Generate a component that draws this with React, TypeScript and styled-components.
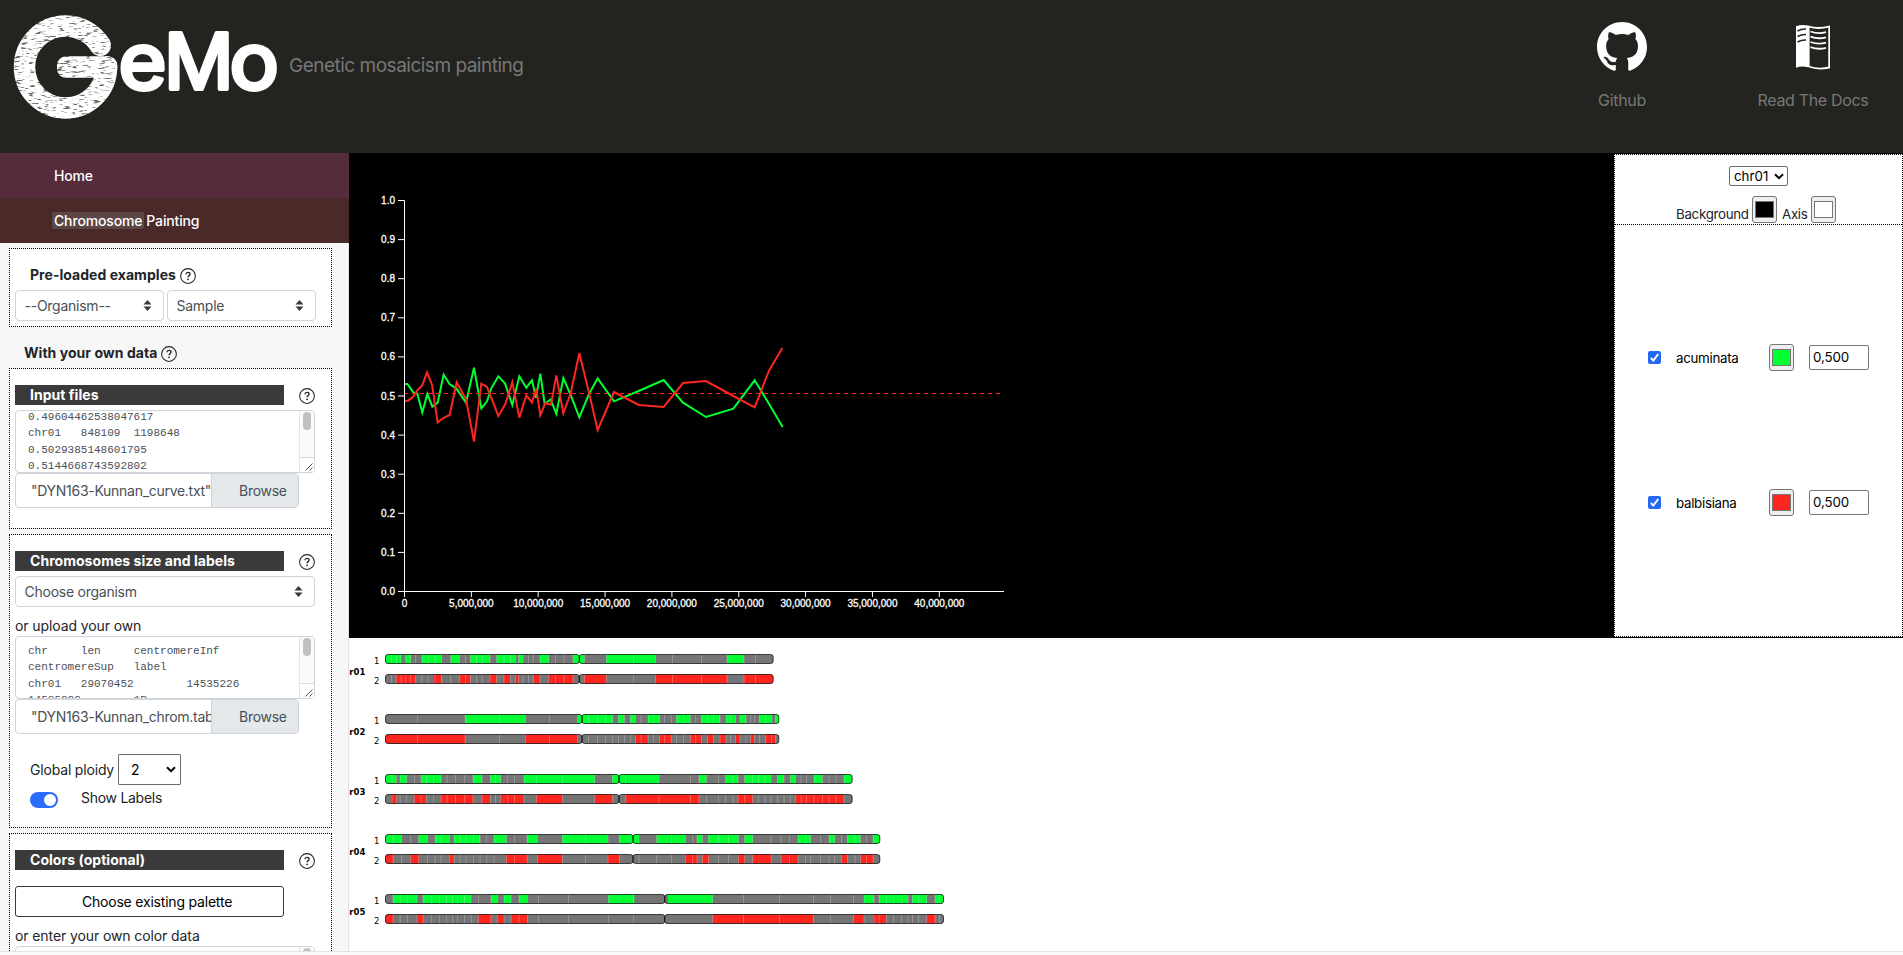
import React from "react";
import styled, { createGlobalStyle } from "styled-components";

const GlobalStyle = createGlobalStyle`
  * { box-sizing: border-box; }
  html, body { margin: 0; padding: 0; background: #fafafa; overflow: hidden; }
  body { font-family: Inter, "Liberation Sans", sans-serif; font-size: 14px; line-height: 20px; letter-spacing: -0.1px; color: #212529; }
  svg { display: block; letter-spacing: 0; }
`;

const Page = styled.div`
  width: 1903px;
  height: 955px;
  display: flex;
  flex-direction: column;
`;

const Header = styled.header`
  height: 153px;
  flex: none;
  background: #23241f;
  display: flex;
  align-items: flex-start;
  color: #777;
`;

const Tagline = styled.div`
  margin: 53px auto 0 0;
  font-size: 19px;
  line-height: 25px;
  letter-spacing: -0.5px;
`;

const HeaderLink = styled.a<{ $width: number; $gap: number }>`
  width: ${(p) => p.$width}px;
  margin-right: ${(p) => p.$gap}px;
  padding-top: 22px;
  display: flex;
  flex-direction: column;
  align-items: center;
  font-size: 16px;
  line-height: 24px;
  letter-spacing: -0.32px;
  white-space: nowrap;
`;

const LinkIcon = styled.span`
  height: 66px;
`;

const Body = styled.div`
  display: flex;
  height: 798px;
  flex: none;
`;

const Footer = styled.footer`
  height: 4px;
  border-top: 1px solid #e3e3e3;
  background: #fafafa;
`;

const Sidebar = styled.aside`
  width: 349px;
  flex: none;
  background: #f7f7f7;
  box-shadow: inset -1px 0 #e3e3e3;
  overflow: hidden;
`;

const NavItem = styled.a<{ $bg: string }>`
  display: flex;
  align-items: center;
  width: 349px;
  height: 45px;
  padding-left: 54px;
  color: #fff;
  font-weight: 500;
  letter-spacing: -0.15px;
  background: ${(p) => p.$bg};
`;

const Marked = styled.span`
  margin: 0 2px 0 -2px;
  padding: 0 2px;
  line-height: 17px;
  border-radius: 2px;
  background: #5d4746;
`;

const Panel = styled.section<{ $height: number; $top: number }>`
  width: 323px;
  height: ${(p) => p.$height}px;
  margin: ${(p) => p.$top}px 0 0 9px;
  padding: 16px 0 0 5px;
  border: 1px dotted #000;
  background: #fff;
`;

const Heading = styled.h2<{ $indent: number; $top?: number }>`
  height: 25px;
  margin: ${(p) => p.$top ?? 0}px 0 0;
  padding-left: ${(p) => p.$indent}px;
  display: flex;
  gap: 4px;
  font-size: 14px;
  line-height: 20px;
  font-weight: 700;
  letter-spacing: 0.04px;
`;

const TitleRow = styled.div`
  height: 25px;
  width: 300px;
  display: flex;
  justify-content: space-between;
`;

const TitleBar = styled.h3`
  width: 269px;
  height: 20px;
  margin: 0;
  padding-left: 15px;
  font-size: 14px;
  line-height: 20px;
  font-weight: 700;
  letter-spacing: 0.04px;
  color: #fff;
  background: #3a3a3a;
`;

const HelpBox = styled.span`
  padding-top: 3px;
`;

const SelectRow = styled.div`
  display: flex;
  gap: 3px;
`;

const SelectBox = styled.div<{ $width: number }>`
  width: ${(p) => p.$width}px;
  height: 31px;
  padding: 0 11px 0 8.5px;
  display: flex;
  align-items: center;
  justify-content: space-between;
  letter-spacing: -0.25px;
  color: #495057;
  border: 1px solid #ced4da;
  border-radius: 4px;
  background: #fff;
`;

const TextArea = styled.div`
  width: 300px;
  height: 63px;
  display: flex;
  border: 1px solid #ced4da;
  border-radius: 4px;
  overflow: hidden;
  background: #fff;
`;

const TextAreaBody = styled.pre<{ $shift: number }>`
  flex: 1;
  height: 61px;
  margin: 0;
  padding-left: 12px;
  overflow: hidden;
  font: 11px/16.4px "Liberation Mono", monospace;
  letter-spacing: 0;
  tab-size: 8;
  color: #495057;

  &::before {
    content: "";
    display: block;
    margin-top: ${(p) => p.$shift}px;
  }
`;

const ScrollTrack = styled.div`
  width: 15px;
  display: flex;
  flex-direction: column;
  justify-content: space-between;
  align-items: center;
  padding-top: 1px;
  background: #fafafa;
  border-left: 1px solid #e4e4e4;
`;

const Thumb = styled.div`
  width: 8px;
  height: 18px;
  border-radius: 4px;
  background: #c1c1c1;
`;

const Resizer = styled.div`
  width: 14px;
  height: 15px;
  border-top: 1px solid #dcdcdc;
  background: #fff;
`;

const FileInput = styled.div`
  width: 284px;
  height: 35px;
  display: flex;
  line-height: 34px;
  letter-spacing: -0.28px;
  color: #495057;
  border: 1px solid #ced4da;
  border-radius: 4px;
  overflow: hidden;
`;

const FileName = styled.span`
  width: 195px;
  flex: none;
  padding-left: 15px;
  overflow: hidden;
  white-space: nowrap;
`;

const Browse = styled.span`
  flex: 1;
  padding-left: 27px;
  background: #e4e8eb;
  border-left: 1px solid #ced4da;
`;

const Hint = styled.p<{ $top: number }>`
  margin: ${(p) => p.$top}px 0 0;
  height: 20px;
`;

const PloidyRow = styled.div`
  display: flex;
  align-items: center;
  justify-content: space-between;
  width: 166px;
  height: 31px;
  margin-top: 20px;
  padding-left: 15px;
  letter-spacing: -0.18px;
`;

const PloidySelect = styled.div`
  width: 63px;
  height: 31px;
  padding: 0 4px 0 12px;
  display: flex;
  align-items: center;
  justify-content: space-between;
  border: 1px solid #6b6b6b;
  border-radius: 1px;
  color: #000;
`;

const SwitchRow = styled.div`
  display: flex;
  gap: 23px;
  margin-top: 3px;
  padding-left: 15px;
  letter-spacing: -0.28px;
`;

const Switch = styled.span`
  width: 28px;
  height: 16px;
  margin-top: 4px;
  padding: 2px;
  display: flex;
  justify-content: flex-end;
  border-radius: 8px;
  background: #2a6cfb;
`;

const Knob = styled.span`
  width: 12px;
  height: 12px;
  border-radius: 50%;
  background: #fff;
`;

const PaletteButton = styled.button`
  display: block;
  width: 269px;
  height: 31px;
  margin-top: 11px;
  padding: 0 0 0 15px;
  font: inherit;
  letter-spacing: -0.2px;
  color: #000;
  background: #fff;
  border: 1px solid #343a40;
  border-radius: 3px;
`;

const Main = styled.main`
  flex: 1;
  display: flex;
  flex-direction: column;
  background: #fff;
`;

const CurveArea = styled.section`
  height: 485px;
  flex: none;
  display: flex;
  background: #000;
`;

const CurvePlot = styled.div`
  width: 1265px;
  flex: none;
`;

const Controls = styled.div`
  width: 289px;
  height: 483px;
  margin-top: 1px;
  border: 1px dotted #000;
  background: #fff;
  font-size: 13.33px;
  letter-spacing: -0.3px;
`;

const ControlsTop = styled.div`
  height: 70px;
  padding-top: 11px;
  border-bottom: 1px dotted #000;
`;

const ChrSelect = styled.div`
  width: 59px;
  height: 20px;
  margin: 0 0 10px 114px;
  padding: 0 3px 0 4px;
  display: flex;
  align-items: center;
  justify-content: space-between;
  letter-spacing: 0;
  color: #000;
  border: 1px solid #6b6b6b;
  border-radius: 2px;
`;

const ColorLine = styled.div`
  display: flex;
  padding-left: 61px;
`;

const ColorLabel = styled.span<{ $width: number; $indent?: number }>`
  width: ${(p) => p.$width}px;
  padding: 8px 0 0 ${(p) => p.$indent ?? 0}px;
  white-space: nowrap;
`;

const ColorWell = styled.span`
  width: 25px;
  height: 27px;
  flex: none;
  padding: 4px 2px;
  border: 1px solid #767676;
  border-radius: 3px;
  background: #efefef;
`;

const ColorChip = styled.span<{ $color: string }>`
  display: block;
  width: 19px;
  height: 17px;
  border: 1px solid #777;
  background: ${(p) => p.$color};
`;

const AncestorRow = styled.div<{ $top: number }>`
  height: 27px;
  margin-top: ${(p) => p.$top}px;
  padding-left: 33px;
  display: flex;
  align-items: center;
  color: #000;
`;

const Checkbox = styled.span`
  width: 13px;
  height: 13px;
  border-radius: 2px;
  background: #2468f2;
`;

const AncestorName = styled.span`
  width: 93px;
  margin-left: 15px;
`;

const NumberBox = styled.span`
  width: 60px;
  height: 25px;
  margin-left: 15px;
  padding-left: 3px;
  line-height: 23px;
  letter-spacing: -0.1px;
  border: 1px solid #767676;
  border-radius: 2px;
`;

const Help = () => (
  <HelpBox>
    <svg width="16" height="16" viewBox="0 0 16 16" fill="none" stroke="#212529" strokeWidth="1.05">
      <circle cx="8" cy="8" r="7.4" />
      <path d="M5.9 6.2c.1-1.2.9-1.900 2.1-1.900s2.100.7 2.100 1.800c0 1.500-2 1.500-2 3.100" strokeWidth="1.35" />
      <circle cx="8.05" cy="11.3" r=".9" fill="#212529" stroke="none" />
    </svg>
  </HelpBox>
);

const Updown = () => (
  <svg width="9" height="11" viewBox="0 0 9 11" fill="#343a40">
    <path d="M4.5 0 8.5 4.5h-8zM4.5 11 .5 6.5h8z" />
  </svg>
);

const Chevron = () => (
  <svg width="10" height="7" viewBox="0 0 10 7" fill="none" stroke="#000" strokeWidth="2">
    <path d="M1 1.2l4 4 4-4" />
  </svg>
);

const Logo = () => (
  <svg width="289" height="130" viewBox="0 0 289 130">
    <defs>
      <filter id="streaks" x="0" y="0" width="100%" height="100%">
        <feTurbulence type="fractalNoise" baseFrequency="0.14 0.6" numOctaves="2" seed="7" />
        <feColorMatrix values="0 0 0 0 .14  0 0 0 0 .14  0 0 0 0 .12  6 0 0 0 -3.4" />
      </filter>
      <mask id="mark">
        <circle
          cx="65.5" cy="67" r="41" fill="none" stroke="#fff" strokeWidth="21.5"
          strokeLinecap="round" pathLength="360" strokeDasharray="328 32"
        />
        <rect x="57" y="56.3" width="60.3" height="21.5" rx="9" fill="#fff" />
      </mask>
    </defs>
    <g mask="url(#mark)">
      <rect x="10" y="10" width="110" height="112" fill="#fff" />
      <rect x="10" y="10" width="110" height="112" filter="url(#streaks)" />
    </g>
    <g fill="#fff" stroke="#fff" strokeWidth="4" strokeLinejoin="round" fontFamily="Inter" fontWeight="400" fontSize="77">
      <text transform="translate(118.500 88.500) scale(1.070 1)">e</text>
      <text transform="translate(164 88.500)">M</text>
      <text transform="translate(229.500 88.500) scale(1.070 1)">o</text>
    </g>
  </svg>
);

const GithubMark = () => (
  <svg width="50" height="50" viewBox="0 0 16 16" fill="#fff">
    <path d="M8 0C3.58 0 0 3.58 0 8c0 3.54 2.29 6.53 5.47 7.59.4.07.55-.17.55-.38 0-.19-.01-.82-.01-1.49-2.01.37-2.53-.49-2.69-.94-.09-.23-.48-.94-.82-1.13-.28-.15-.68-.52-.01-.53.63-.01 1.08.58 1.23.82.72 1.21 1.87.87 2.33.66.07-.52.28-.87.51-1.07-1.78-.2-3.64-.89-3.64-3.95 0-.87.31-1.59.82-2.15-.08-.2-.36-1.02.08-2.12 0 0 .67-.21 2.2.82.64-.18 1.32-.27 2-.27.68 0 1.36.09 2 .27 1.53-1.04 2.2-.82 2.2-.82.44 1.1.16 1.92.08 2.12.51.56.82 1.27.82 2.15 0 3.07-1.87 3.75-3.65 3.95.29.25.54.73.54 1.48 0 1.07-.01 1.93-.01 2.2 0 .21.15.46.55.38A8.013 8.013 0 0016 8c0-4.42-3.58-8-8-8z" />
  </svg>
);

const DocsMark = () => (
  <svg width="34" height="50" viewBox="0 0 34 50">
    <path d="M0 4.2Q6 2 12 3.6V45.300Q6 43.500 0 45.800Z" fill="#fff" />
    <path d="M12.700 4.500Q22 7.500 33.200 4.500V45.500Q22 48 12.700 44.500Z" fill="none" stroke="#fff" strokeWidth="1.8" />
    <g fill="none" stroke="#23241f" strokeWidth="1.5">
      <path d="M1.500 9q4-2.200 8.500-2M1.500 14.500q4-2.200 8.500-2M1.500 20q4-2.200 8.500-2" />
    </g>
    <g fill="none" stroke="#fff" strokeWidth="1.8">
      <path d="M14.500 9.500q8 2.800 15.500.6M14.500 14.700q8 2.800 15.500.6M14.500 20q8 2.800 15.500.6M14.500 25.200q8 2.800 15.500.6" />
    </g>
  </svg>
);

const Scroll = () => (
  <ScrollTrack>
    <Thumb />
    <Resizer>
      <svg width="14" height="14" viewBox="0 0 14 14" stroke="#555" strokeWidth="1">
        <path d="M5.500 12.500l7-7M9.500 12.500l3-3" />
      </svg>
    </Resizer>
  </ScrollTrack>
);

/* Curve points, in thirds of a pixel from the left of the x range */
const ACUMINATA = [75,192,82,192,100,217,112,221,127,277,142,222,157,260,173,248,191,164,209,193,229,205,258,248,282,143,304,265,321,244,334,205,355,169,375,190,397,255,418,169,439,203,456,181,468,233,481,161,494,252,512,238,529,282,550,174,572,225,598,292,627,222,653,175,702,244,776,213,851,180,909,248,978,291,1060,266,1124,181,1165,248,1208,321];
const BALBISIANA = [75,243,84,242,98,232,112,211,127,196,141,157,156,194,173,307,190,294,209,285,230,187,258,238,282,365,304,191,321,201,334,233,355,288,376,252,397,187,418,293,439,226,456,247,469,206,481,286,496,249,513,254,529,166,550,280,572,220,598,100,627,218,653,330,702,216,776,255,851,261,909,189,978,183,1060,228,1124,262,1167,152,1207,84];

const toPoints = (flat: number[]) => {
  const out: string[] = [];
  for (let i = 0; i < flat.length; i += 2) {
    out.push(`${(31 + flat[i] / 3).toFixed(2)},${(167 + flat[i + 1] / 3).toFixed(2)}`);
  }
  return out.join(" ");
};

const CurveChart = () => (
  <svg width="1265" height="485" viewBox="0 0 1265 485" fontFamily="Liberation Sans" fontSize="10" fill="#fff">
    <polyline points={toPoints(ACUMINATA)} fill="none" stroke="#00ff33" strokeWidth="2" />
    <polyline points={toPoints(BALBISIANA)} fill="none" stroke="#ff2620" strokeWidth="2" />
    <path d="M55 240.500H654" stroke="#ff2620" strokeDasharray="4 4" />
    <path d="M49 47.500h6.500v391M49 438.500h606M55.500 438v6" fill="none" stroke="#fff" />
    {Array.from({ length: 11 }, (_, i) => (
      <g key={i}>
        <path d={`M49 ${47.5 + i * 39.1}h6`} stroke="#fff" />
        <text x="46" y={51 + i * 39.1} textAnchor="end" stroke="#fff" strokeWidth=".3">{(1 - i / 10).toFixed(1)}</text>
      </g>
    ))}
    {Array.from({ length: 9 }, (_, i) => (
      <g key={i}>
        <path d={`M${55.5 + i * 66.85} 438v6`} stroke="#fff" />
        <text x={55.5 + i * 66.85} y="454" textAnchor="middle" stroke="#fff" strokeWidth=".3">
          {(i * 5000000).toLocaleString("en-US")}
        </text>
      </g>
    ))}
  </svg>
);

type Chromosome = {
  label: string;
  centromere: number;
  end: number;
  breaks: number[];
  first: number[];
  second: number[];
};

const CHROMOSOMES: Chromosome[] = [
  {
    label: "r01", centromere: 703, end: 1286,
    breaks: [139,154,168,182,197,212,231,249,270,290,317,343,361,376,394,411,435,455,477,496,511,521,534,550,564,585,611,631,657,684,718,784,865,932,982,1069,1146,1197,1231],
    first: [120,168,182,197,231,290,317,343,376,435,455,511,521,534,585,611,684,718,784,932,1146,1197],
    second: [154,212,265,288,343,376,434,454,477,495,511,521,567,585,611,684,718,784,932,1146,1197,1286],
  },
  {
    label: "r02", centromere: 711, end: 1303,
    breaks: [217,360,463,541,613,698,730,757,782,803,820,838,856,871,888,909,925,944,958,978,994,1015,1036,1052,1069,1087,1105,1125,1143,1157,1171,1185,1203,1217,1229,1243,1262,1280,1291],
    first: [360,541,698,803,820,838,856,871,909,944,994,1036,1069,1125,1143,1171,1185,1203,1243,1280,1291,1303],
    second: [120,360,541,698,871,909,944,978,1036,1069,1087,1104,1125,1143,1171,1185,1217,1228,1262,1291],
  },
  {
    label: "r03", centromere: 822, end: 1523,
    breaks: [141,154,165,185,208,228,244,265,288,306,331,359,384,411,436,451,467,488,508,537,574,652,749,802,842,942,1036,1062,1084,1120,1142,1164,1179,1199,1223,1241,1260,1278,1297,1317,1336,1351,1368,1384,1407,1432,1452,1473,1497],
    first: [120,154,165,185,228,288,384,411,436,467,537,749,802,942,1062,1084,1142,1179,1199,1278,1297,1317,1336,1351,1407,1432,1497,1523],
    second: [139,154,208,243,287,384,411,435,467,537,574,652,749,802,842,1062,1179,1223,1351,1497],
  },
  {
    label: "r04", centromere: 864, end: 1606,
    breaks: [144,170,197,221,247,270,288,313,327,345,363,385,405,425,447,484,508,546,577,652,721,789,823,882,935,979,1021,1043,1056,1072,1090,1120,1150,1180,1199,1223,1278,1308,1333,1359,1381,1397,1426,1452,1469,1490,1507,1530,1546,1564,1584],
    first: [120,170,221,247,270,313,327,405,447,484,546,577,652,789,823,882,935,1021,1056,1072,1090,1180,1199,1223,1359,1397,1452,1469,1507,1546,1584,1606],
    second: [120,144,197,221,313,327,484,546,577,652,789,823,1021,1057,1072,1091,1180,1199,1223,1278,1308,1359,1490,1507,1547,1584],
  },
  {
    label: "r05", centromere: 959, end: 1797,
    breaks: [144,165,188,216,234,259,283,304,322,337,358,378,400,438,457,477,498,522,547,580,670,790,865,1103,1195,1303,1405,1456,1525,1557,1587,1602,1624,1646,1670,1689,1702,1720,1745,1770,1783],
    first: [144,216,234,378,438,457,477,498,522,547,790,868,969,1103,1557,1587,1602,1689,1702,1745,1770,1797],
    second: [120,144,216,234,400,438,457,477,498,547,1103,1405,1526,1557,1585,1623,1745,1770],
  },
];

const px = (v: number) => v / 3 - 4;

const Strand = ({ chr, spans, color, y, id }: { chr: Chromosome; spans: number[]; color: string; y: number; id: string }) => {
  const x0 = px(121.5);
  const xc = px(chr.centromere);
  const x1 = px(chr.end);
  const arms = (
    <>
      <rect x={x0} y={y + 0.5} width={xc - x0} height="9" rx="2.500" />
      <rect x={xc} y={y + 0.5} width={x1 - xc - 0.5} height="9" rx="2.500" />
    </>
  );
  const parts: React.ReactNode[] = [];
  for (let i = 0; i < spans.length; i += 2) {
    parts.push(<rect key={i} x={px(spans[i])} y={y} width={(spans[i + 1] - spans[i]) / 3} height="10" fill={color} />);
  }
  return (
    <g>
      <clipPath id={id}>{arms}</clipPath>
      <g clipPath={`url(#${id})`}>
        <rect x={x0 - 1} y={y} width={x1 - x0 + 2} height="10" fill="#757575" />
        {parts}
        {chr.breaks.map((b) => (
          <rect key={b} x={px(b) - 0.3} y={y} width="0.7" height="10" fill="#fff" opacity=".35" />
        ))}
      </g>
      <g fill="none" stroke="#000" strokeOpacity=".68">{arms}</g>
    </g>
  );
};

const Ideogram = () => (
  <svg width="1554" height="313" viewBox="0 0 1554 313" fontFamily="DejaVu Sans" fill="#000">
    {CHROMOSOMES.map((chr, i) => {
      const y = 16 + i * 60;
      return (
        <g key={chr.label}>
          <text x="0.300" y={y + 20.5} fontSize="9.500" fontWeight="700" textLength="16" lengthAdjust="spacingAndGlyphs">{chr.label}</text>
          <text x="25" y={y + 10} fontSize="8.500">1</text>
          <text x="25" y={y + 30} fontSize="8.500">2</text>
          <Strand chr={chr} spans={chr.first} color="#00ff33" y={y} id={`a${i}`} />
          <Strand chr={chr} spans={chr.second} color="#ff2620" y={y + 20} id={`b${i}`} />
        </g>
      );
    })}
  </svg>
);

const Ancestor = ({ name, color, top }: { name: string; color: string; top: number }) => (
  <AncestorRow $top={top}>
    <Checkbox>
      <svg width="13" height="13" viewBox="0 0 13 13" fill="none" stroke="#fff" strokeWidth="2">
        <path d="M2.800 7l2.600 2.500L10.200 3" />
      </svg>
    </Checkbox>
    <AncestorName>{name}</AncestorName>
    <ColorWell><ColorChip $color={color} /></ColorWell>
    <NumberBox>0,500</NumberBox>
  </AncestorRow>
);

export default function App() {
  return (
    <Page>
      <GlobalStyle />
      <Header>
        <Logo />
        <Tagline>Genetic mosaicism painting</Tagline>
        <HeaderLink $width={60} $gap={101}>
          <LinkIcon><GithubMark /></LinkIcon>
          Github
        </HeaderLink>
        <HeaderLink $width={120} $gap={30}>
          <LinkIcon><DocsMark /></LinkIcon>
          Read The Docs
        </HeaderLink>
      </Header>
      <Body>
        <Sidebar>
          <NavItem $bg="#562b3c">Home</NavItem>
          <NavItem $bg="#4a2a29"><Marked>Chromosome</Marked>Painting</NavItem>

          <Panel $top={5} $height={79}>
            <Heading $indent={15}>Pre-loaded examples<Help /></Heading>
            <SelectRow>
              <SelectBox $width={149}>--Organism--<Updown /></SelectBox>
              <SelectBox $width={149}>Sample<Updown /></SelectBox>
            </SelectRow>
          </Panel>

          <Heading $indent={24} $top={16}>With your own data<Help /></Heading>

          <Panel $top={0} $height={161}>
            <TitleRow><TitleBar>Input files</TitleBar><Help /></TitleRow>
            <TextArea>
              <TextAreaBody $shift={-2}>{"0.49604462538047617\nchr01\t848109\t1198648\n0.5029385148601795\n0.5144668743592802"}</TextAreaBody>
              <Scroll />
            </TextArea>
            <FileInput>
              <FileName>"DYN163-Kunnan_curve.txt"</FileName>
              <Browse>Browse</Browse>
            </FileInput>
          </Panel>

          <Panel $top={5} $height={294}>
            <TitleRow><TitleBar>Chromosomes size and labels</TitleBar><Help /></TitleRow>
            <SelectBox $width={300}>Choose organism<Updown /></SelectBox>
            <Hint $top={9}>or upload your own</Hint>
            <TextArea>
              <TextAreaBody $shift={6}>{"chr\tlen\tcentromereInf\ncentromereSup\tlabel\nchr01\t29070452\t14535226\n14535228\t1R"}</TextAreaBody>
              <Scroll />
            </TextArea>
            <FileInput>
              <FileName>"DYN163-Kunnan_chrom.tab"</FileName>
              <Browse>Browse</Browse>
            </FileInput>
            <PloidyRow>
              Global ploidy
              <PloidySelect>2<Chevron /></PloidySelect>
            </PloidyRow>
            <SwitchRow>
              <Switch><Knob /></Switch>
              Show Labels
            </SwitchRow>
          </Panel>

          <Panel $top={5} $height={200}>
            <TitleRow><TitleBar>Colors (optional)</TitleBar><Help /></TitleRow>
            <PaletteButton>Choose existing palette</PaletteButton>
            <Hint $top={9}>or enter your own color data</Hint>
            <TextArea>
              <TextAreaBody $shift={6} />
              <Scroll />
            </TextArea>
          </Panel>
        </Sidebar>

        <Main>
          <CurveArea>
            <CurvePlot><CurveChart /></CurvePlot>
            <Controls>
              <ControlsTop>
                <ChrSelect>chr01<Chevron /></ChrSelect>
                <ColorLine>
                  <ColorLabel $width={76}>Background</ColorLabel>
                  <ColorWell><ColorChip $color="#000" /></ColorWell>
                  <ColorLabel $width={34} $indent={5}>Axis</ColorLabel>
                  <ColorWell><ColorChip $color="#fff" /></ColorWell>
                </ColorLine>
              </ControlsTop>
              <Ancestor name="acuminata" color="#00ff33" top={119} />
              <Ancestor name="balbisiana" color="#ff2620" top={118} />
            </Controls>
          </CurveArea>
          <Ideogram />
        </Main>
      </Body>
      <Footer />
    </Page>
  );
}
